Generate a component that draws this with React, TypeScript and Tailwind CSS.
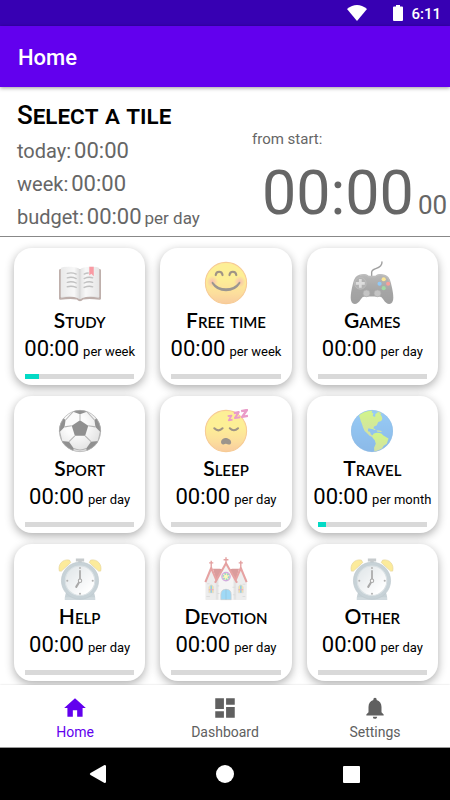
import type { ReactNode } from 'react';
import { MdDashboard, MdHome, MdNotifications } from 'react-icons/md';

interface Tile {
  name: string;
  icon: ReactNode;
  time: string;
  period: string;
  progress: number;
}

function Emoji({ children }: { children: ReactNode }) {
  return (
    <svg viewBox="0 0 128 128" className="w-11 h-11 opacity-50" aria-hidden="true">
      {children}
    </svg>
  );
}

function FaceGradient({ id }: { id: string }) {
  return (
    <linearGradient id={id} x1="0" y1="0" x2="0" y2="1">
      <stop offset="0.4" stopColor="#fde030" />
      <stop offset="0.75" stopColor="#fbbf3c" />
      <stop offset="1" stopColor="#f29a40" />
    </linearGradient>
  );
}

function BookIcon() {
  return (
    <Emoji>
      <defs>
        <linearGradient id="page-left" x1="0" x2="1">
          <stop offset="0" stopColor="#d5d5d5" />
          <stop offset="0.7" stopColor="#f2f2f2" />
          <stop offset="1" stopColor="#b8b8b8" />
        </linearGradient>
        <linearGradient id="page-right" x1="0" x2="1">
          <stop offset="0" stopColor="#c8c8c8" />
          <stop offset="0.3" stopColor="#f2f2f2" />
          <stop offset="1" stopColor="#cfcfcf" />
        </linearGradient>
      </defs>
      <path d="M3 27q0-4 5-4h112q5 0 5 4v83q0 3-4 3-28-4-48-1-4 5-9 5t-9-5q-20-3-48 1-4 0-4-3z" fill="#7d5f57" />
      <path d="M9 108q31-8 49 0 6 5 12 0 18-8 49 0v-6H9z" fill="#b0a8a6" />
      <path d="M8 21q4-4 24-4 25 0 32 8v86q-16-12-56-6z" fill="url(#page-left)" />
      <path d="M120 21q-4-4-24-4-25 0-32 8v86q16-12 56-6z" fill="url(#page-right)" />
      <path d="M64 25v86" stroke="#aaa" strokeWidth="2" />
      <path
        d="M27 36q13-4 26 2M27 49q13-4 26 2M27 62q13-4 26 2M27 75q13-4 26 2M76 38q6-3 12-3M76 51q13-6 25-2M76 64q13-6 25-2M76 77q13-6 25-2"
        fill="none"
        stroke="#858585"
        strokeWidth="4"
        strokeLinecap="round"
      />
      <path d="M91 17h13v27l-7-7-6 5z" fill="#f4384a" />
    </Emoji>
  );
}

function SmileIcon() {
  return (
    <Emoji>
      <defs>
        <FaceGradient id="smile-face" />
        <radialGradient id="blush">
          <stop offset="0" stopColor="#ed6b70" stopOpacity="0.8" />
          <stop offset="1" stopColor="#ed6b70" stopOpacity="0" />
        </radialGradient>
      </defs>
      <circle cx="64" cy="64" r="60" fill="url(#smile-face)" stroke="#f0982c" strokeWidth="3" />
      <circle cx="24" cy="60" r="17" fill="url(#blush)" />
      <circle cx="104" cy="60" r="17" fill="url(#blush)" />
      <path d="M34 41q1-10 10-10t10 10M74 41q1-10 10-10t10 10" fill="none" stroke="#422b0d" strokeWidth="6" strokeLinecap="round" />
      <path d="M23 61q3-2 5 2 13 16 36 16t36-16q2-4 5-2 2 2 0 5-13 22-41 22T23 66q-2-3 0-5z" fill="#3a3025" />
    </Emoji>
  );
}

function GamepadIcon() {
  return (
    <Emoji>
      <defs>
        <linearGradient id="pad" x1="0" y1="0" x2="0" y2="1">
          <stop offset="0" stopColor="#757575" />
          <stop offset="0.55" stopColor="#4e4e4e" />
          <stop offset="1" stopColor="#424242" />
        </linearGradient>
      </defs>
      <path d="M63 43V33q0-7 12-11 19-6 18-19" fill="none" stroke="#424242" strokeWidth="4" strokeLinecap="round" />
      <path
        d="M27 40q16-4 23 0l4 3h20l4-3q7-4 23 0 13 3 18 24 7 28 7 43 0 17-12 18-9 0-17-13-5-9-11-9H42q-6 0-11 9-8 13-17 13-12-1-12-18 0-15 7-43 5-21 18-24z"
        fill="url(#pad)"
      />
      <path d="M29 42q14-4 20 0l5 4h20l5-4q7-4 20 0 12 3 16 19" fill="none" stroke="#8a8a8a" strokeWidth="2" />
      <circle cx="30" cy="65" r="17" fill="#686868" stroke="#858585" strokeWidth="2" />
      <path d="M26 52h8v9h9v8h-9v9h-8v-9h-9v-8h9z" fill="#bdbdbd" />
      <circle cx="48" cy="94" r="10" fill="#8a8a8a" stroke="#5d5d5d" strokeWidth="2" />
      <circle cx="80" cy="94" r="10" fill="#8a8a8a" stroke="#5d5d5d" strokeWidth="2" />
      <circle cx="98" cy="53" r="6" fill="#fdd02b" />
      <circle cx="86" cy="66" r="6" fill="#2196f3" />
      <circle cx="111" cy="66" r="6" fill="#f44336" />
      <circle cx="98" cy="79" r="6" fill="#43b64b" />
    </Emoji>
  );
}

function BallIcon() {
  return (
    <Emoji>
      <defs>
        <radialGradient id="ball" cx="0.4" cy="0.35" r="0.65">
          <stop offset="0.4" stopColor="#f8f8f8" />
          <stop offset="1" stopColor="#c6c6c6" />
        </radialGradient>
        <clipPath id="ball-edge">
          <circle cx="64" cy="64" r="61" />
        </clipPath>
      </defs>
      <circle cx="64" cy="64" r="61" fill="url(#ball)" />
      <g clipPath="url(#ball-edge)">
        <g fill="#242424">
          <path d="M64 33l24 16-9 29H49L40 49z" />
          <path d="M41 0h46l-3 8-20 7-20-7z" />
          <path d="M0 67V44l13-19 9 7-3 20L5 67z" />
          <path d="M128 67V44l-13-19-9 7 3 20 14 15z" />
          <path d="M11 93l21 2 14 20-3 11H28L8 105z" />
          <path d="M117 93l-21 2-14 20 3 11h15l20-21z" />
        </g>
        <path
          d="M64 15v18M40 49L19 52M88 49l21 3M49 78L32 95M79 78l17 17M46 115q18 8 36 0M22 32l22-24M106 32L84 8M5 67l6 26M123 67l-6 26"
          fill="none"
          stroke="#6c6c6c"
          strokeWidth="3"
        />
      </g>
      <circle cx="64" cy="64" r="60" fill="none" stroke="#666" strokeWidth="2" />
    </Emoji>
  );
}

function SleepIcon() {
  return (
    <Emoji>
      <defs>
        <FaceGradient id="sleep-face" />
      </defs>
      <circle cx="64" cy="64" r="60" fill="url(#sleep-face)" stroke="#f0982c" strokeWidth="3" />
      <path d="M30 56q12 12 24 0M75 56q12 12 24 0" fill="none" stroke="#422b0d" strokeWidth="6" strokeLinecap="round" />
      <path d="M52 102c-6-6 0-18 10-18 8 0 17 5 17 13 0 10-10 6-15 4-5-1-8 5-12 1z" fill="#3a2c1c" />
      <g fill="none" stroke="#d63c93" strokeLinejoin="round">
        <path d="M69 21l11-2-8 14 11-2" strokeWidth="5" />
        <path d="M87 12l14-3-11 17 15-2" strokeWidth="6" />
        <path d="M108 6l17-3-14 20 17-3" strokeWidth="7" />
      </g>
    </Emoji>
  );
}

function GlobeIcon() {
  return (
    <Emoji>
      <defs>
        <linearGradient id="sea" x1="0" y1="0" x2="0" y2="1">
          <stop offset="0" stopColor="#3298ee" />
          <stop offset="1" stopColor="#1976d2" />
        </linearGradient>
        <linearGradient id="land" x1="0" y1="0" x2="0" y2="1">
          <stop offset="0" stopColor="#a6ed16" />
          <stop offset="1" stopColor="#a9c14f" />
        </linearGradient>
        <clipPath id="globe-edge">
          <circle cx="64" cy="64" r="60" />
        </clipPath>
      </defs>
      <circle cx="64" cy="64" r="61" fill="url(#sea)" />
      <g clipPath="url(#globe-edge)" fill="url(#land)">
        <path d="M27 16Q46 0 66 3l-3 7 5 2-2 8 7 3 1-9 8-4q10 5 12 18l-3 7-9 3-4 9-8 4-3 8-6-4-8 2-1 8 6 1 3 8 7 3-1 5q-11-2-18-12-8-5-11-16-4-14-7-20-2-9-4-13z" />
        <path d="M76 6l12 2 4 7-9-2z" />
        <path d="M57 56q10-3 18 4l-4 1q-6-4-14-3zM77 62l12 1 5 4-14-1z" />
        <path d="M68 72q12-6 23-1l6 6q10 5 15 9l-5 15-9 6-5 8-8 4-9 8H71l-1-14 5-12-3-10-7-8z" />
      </g>
      <circle cx="64" cy="64" r="60" fill="none" stroke="#2a7cc7" strokeWidth="2" opacity="0.6" />
    </Emoji>
  );
}

function ClockIcon() {
  return (
    <Emoji>
      <defs>
        <linearGradient id="dial" x1="0" y1="0" x2="1" y2="1">
          <stop offset="0.2" stopColor="#cfd8dc" />
          <stop offset="0.8" stopColor="#fff" />
        </linearGradient>
      </defs>
      <path d="M52 4h24v9h-7v9H59v-9h-7z" fill="#90999d" />
      <path d="M4 41C-1 22 13 5 33 9l4 7-27 25z" fill="#fbd83a" stroke="#d0ad31" strokeWidth="2" />
      <path d="M124 41c5-19-9-36-29-32l-4 7 27 25z" fill="#fbd83a" stroke="#d0ad31" strokeWidth="2" />
      <path d="M20 125q-1-18 8-29h72q9 11 8 29z" fill="#8fa4ae" />
      <path d="M20 117h88v8H20z" fill="#a4b6bf" />
      <circle cx="64" cy="69" r="54" fill="#90a6b1" stroke="#7f949f" strokeWidth="2" />
      <circle cx="64" cy="69" r="43" fill="url(#dial)" stroke="#b7c5cb" strokeWidth="3" />
      <path d="M64 71V40" stroke="#555" strokeWidth="5" strokeLinecap="round" />
      <path d="M64 69L53 87" stroke="#555" strokeWidth="6" strokeLinecap="round" />
      <circle cx="64" cy="69" r="5" fill="#eee" stroke="#555" strokeWidth="3" />
      <g fill="#666">
        <circle cx="64" cy="32" r="3" />
        <circle cx="64" cy="107" r="3" />
        <circle cx="27" cy="69" r="3" />
        <circle cx="101" cy="69" r="3" />
      </g>
    </Emoji>
  );
}

function ChurchIcon() {
  return (
    <Emoji>
      <path d="M5 66h118v58H5z" fill="#d6d6d6" />
      <path d="M21 30l18 37v57H5V65zM107 30l18 37-2 57H89V65z" fill="#dcdcdc" />
      <path d="M26 34h20l14 4-22 36zM102 34H82l-14 4 22 36z" fill="#b73b3b" />
      <path d="M64 22l30 45v57H34V67z" fill="#ececec" />
      <path d="M34 71v53h8V62zM94 71v53h-8V62z" fill="#c9c9c9" />
      <path
        d="M4 73l17-41 15 35M124 73l-17-41-15 35M32 75l32-57 32 57"
        fill="none"
        stroke="#cf4848"
        strokeWidth="6"
        strokeLinejoin="round"
      />
      <path d="M64 1v21M57 8h14M21 11v20M15 17h12M107 11v20M101 17h12" fill="none" stroke="#c94343" strokeWidth="4" />
      <circle cx="64" cy="57" r="12" fill="#fff176" stroke="#b055c0" strokeWidth="4" />
      <circle cx="64" cy="57" r="8" fill="none" stroke="#31ab9a" strokeWidth="5" strokeDasharray="5 3" />
      <path d="M49 124v-15q0-15 15-15t15 15v15z" fill="#42b4ef" stroke="#9e9e9e" strokeWidth="2" />
      <path d="M64 94v30" stroke="#3187b5" strokeWidth="2" />
      <path d="M14 104V87q7-12 14 0v17zM100 104V87q7-12 14 0v17z" fill="#fcc63d" stroke="#b5b5b5" strokeWidth="2" />
      <path d="M21 83v21M107 83v21" stroke="#2e9ed1" strokeWidth="5" />
      <path d="M14 95h14M100 95h14" stroke="#ce5991" strokeWidth="3" />
      <path d="M37 84h7M83 88h8M38 106h7M84 110h7M7 115h10M112 79h8M9 78h7M112 115h8" stroke="#bcbcbc" strokeWidth="3" />
    </Emoji>
  );
}

const tiles: Tile[] = [
  { name: 'Study', icon: <BookIcon />, time: '00:00', period: 'per week', progress: 13 },
  { name: 'Free time', icon: <SmileIcon />, time: '00:00', period: 'per week', progress: 0 },
  { name: 'Games', icon: <GamepadIcon />, time: '00:00', period: 'per day', progress: 0 },
  { name: 'Sport', icon: <BallIcon />, time: '00:00', period: 'per day', progress: 0 },
  { name: 'Sleep', icon: <SleepIcon />, time: '00:00', period: 'per day', progress: 0 },
  { name: 'Travel', icon: <GlobeIcon />, time: '00:00', period: 'per month', progress: 8 },
  { name: 'Help', icon: <ClockIcon />, time: '00:00', period: 'per day', progress: 0 },
  { name: 'Devotion', icon: <ChurchIcon />, time: '00:00', period: 'per day', progress: 0 },
  { name: 'Other', icon: <ClockIcon />, time: '00:00', period: 'per day', progress: 0 },
];

const navItems = [
  { label: 'Home', icon: MdHome, active: true },
  { label: 'Dashboard', icon: MdDashboard, active: false },
  { label: 'Settings', icon: MdNotifications, active: false },
];

function StatusBar() {
  return (
    <div className="flex items-center justify-end h-[26px] pr-[9px] bg-[#3700b3] text-white">
      <svg viewBox="0 0 20 16" className="w-5 h-4 mr-[26px]" fill="currentColor" aria-hidden="true">
        <path d="M0 4Q10-4 20 4L10 16z" />
      </svg>
      <svg viewBox="0 0 10 16" className="w-[10px] h-4 mr-2" fill="currentColor" aria-hidden="true">
        <path d="M0 2.500Q0 1.500 1 1.500H3V0H7V1.500H9Q10 1.500 10 2.500V15Q10 16 9 16H1Q0 16 0 15z" />
      </svg>
      <span className="text-[15px] leading-6 pt-[2px] font-medium">6:11</span>
    </div>
  );
}

function Summary() {
  return (
    <section className="grid grid-cols-[56fr_44fr] h-[150px] border-b border-[#888] text-[#666] overflow-hidden">
      <div className="min-w-0 pl-[17px] pt-3">
        <h2 className="text-[26px] leading-8 text-black font-medium [font-variant-caps:small-caps]">Select a tile</h2>
        <dl className="pt-[3px] text-xl leading-[33px] whitespace-nowrap">
          <div className="flex items-baseline gap-[3px] h-[33px]">
            <dt>today:</dt>
            <dd className="text-[22px]">00:00</dd>
          </div>
          <div className="flex items-baseline gap-[3px] h-[33px]">
            <dt>week:</dt>
            <dd className="text-[22px]">00:00</dd>
          </div>
          <div className="flex items-baseline gap-[3px] h-[33px]">
            <dt>budget:</dt>
            <dd className="text-[22px]">00:00</dd>
            <dd className="text-[17px]">per day</dd>
          </div>
        </dl>
      </div>
      <div className="min-w-0 pt-10 whitespace-nowrap">
        <p className="text-[15px] leading-6">from start:</p>
        <p className="flex items-baseline gap-1 pl-[10px] mt-[6px] text-[61px] leading-[72px]">
          00:00
          <span className="text-[26px]">00</span>
        </p>
      </div>
    </section>
  );
}

function TileCard({ tile }: { tile: Tile }) {
  return (
    <button
      type="button"
      className="flex flex-col items-center min-w-0 px-[11px] pt-[13px] pb-[6px] rounded-[18px] bg-white shadow-[0_3px_10px_rgba(0,0,0,0.32)]"
    >
      {tile.icon}
      <span className="text-[21px] leading-[30px] font-semibold font-['Lato','Roboto',sans-serif] [font-variant-caps:small-caps]">
        {tile.name}
      </span>
      <span className="flex items-baseline gap-1 h-7 text-[22px] leading-7 whitespace-nowrap">
        {tile.time}
        <span className="text-[13px]">{tile.period}</span>
      </span>
      <span className="block w-full h-[5px] mt-[11px] bg-[#d9d9d9]">
        <span className="block h-full bg-[#03dac5]" style={{ width: `${tile.progress}%` }} />
      </span>
    </button>
  );
}

export default function App() {
  return (
    <div className="flex flex-col min-h-screen bg-white text-black font-['Roboto','Liberation_Sans',sans-serif]">
      <StatusBar />
      <header className="relative flex items-center h-[61px] px-[18px] pt-[2px] bg-[#6200ee] text-white shadow-[0_1px_4px_rgba(0,0,0,0.4)]">
        <h1 className="text-[22px] font-medium">Home</h1>
      </header>

      <main className="flex-1 overflow-hidden">
        <Summary />
        <div className="grid grid-cols-3 gap-x-[15px] gap-y-[11px] pt-[11px] pb-1 pl-[14px] pr-3">
          {tiles.map((tile) => (
            <TileCard key={tile.name} tile={tile} />
          ))}
        </div>
      </main>

      {/* Bottom navigation */}
      <nav className="relative grid grid-cols-3 h-[63px] bg-white border-b border-[#999] shadow-[0_0_2px_rgba(0,0,0,0.15)]">
        {navItems.map(({ label, icon: Icon, active }) => (
          <a
            key={label}
            href="#"
            className={`flex flex-col items-center pt-[10px] text-sm leading-[22px] ${active ? 'text-[#6200ee]' : 'text-[#606060]'}`}
          >
            <Icon className="w-[26px] h-[26px]" />
            {label}
          </a>
        ))}
      </nav>

      {/* System navigation */}
      <div className="flex items-center justify-around h-[52px] px-[35px] bg-black text-white">
        <button type="button" aria-label="Back">
          <svg viewBox="0 0 18 18" className="w-[18px] h-[18px]" fill="currentColor">
            <path d="M15.500 0Q17 0 17 1V17Q17 18 15.500 18L1.500 10Q0 9 1.500 8z" />
          </svg>
        </button>
        <button type="button" aria-label="Home screen">
          <svg viewBox="0 0 18 18" className="w-[18px] h-[18px]" fill="currentColor">
            <circle cx="9" cy="9" r="9" />
          </svg>
        </button>
        <button type="button" aria-label="Recent apps">
          <svg viewBox="0 0 18 18" className="w-[18px] h-[18px]" fill="currentColor">
            <rect x="0" y="1" width="17" height="17" rx="1" />
          </svg>
        </button>
      </div>
    </div>
  );
}
